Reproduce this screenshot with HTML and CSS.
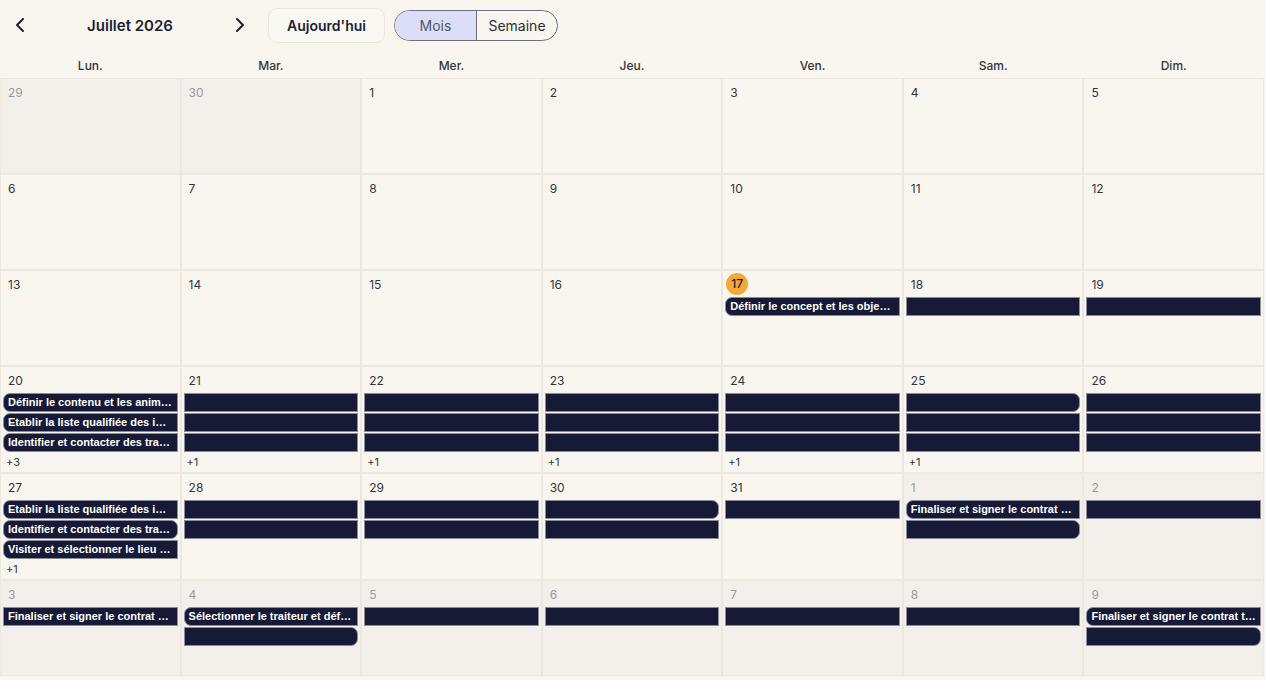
FILE: index.html
```html
<!DOCTYPE html>
<html lang="fr">
<head>
  <meta charset="UTF-8" />
  <meta name="viewport" content="width=device-width, initial-scale=1" />
  <title>Calendrier</title>
  <link rel="stylesheet" href="styles.css">
</head>
<body>
  <header class="toolbar">
    <button class="nav-btn" aria-label="Mois précédent">
      <svg viewBox="0 0 20 20" width="20" height="20"><path d="M13 4 L7 10 L13 16" /></svg>
    </button>
    <h1 class="month-title">Juillet 2026</h1>
    <button class="nav-btn" aria-label="Mois suivant">
      <svg viewBox="0 0 20 20" width="20" height="20"><path d="M7 4 L13 10 L7 16" /></svg>
    </button>
    <button class="today-btn">Aujourd'hui</button>
    <div class="view-switch">
      <button class="active">Mois</button>
      <button>Semaine</button>
    </div>
  </header>

  <div class="weekdays">
    <div>Lun.</div><div>Mar.</div><div>Mer.</div><div>Jeu.</div><div>Ven.</div><div>Sam.</div><div>Dim.</div>
  </div>

  <main class="month">
    <!-- semaine 1 -->
    <div class="day out"><span class="num">29</span></div>
    <div class="day out"><span class="num">30</span></div>
    <div class="day"><span class="num">1</span></div>
    <div class="day"><span class="num">2</span></div>
    <div class="day"><span class="num">3</span></div>
    <div class="day"><span class="num">4</span></div>
    <div class="day"><span class="num">5</span></div>

    <!-- semaine 2 -->
    <div class="day"><span class="num">6</span></div>
    <div class="day"><span class="num">7</span></div>
    <div class="day"><span class="num">8</span></div>
    <div class="day"><span class="num">9</span></div>
    <div class="day"><span class="num">10</span></div>
    <div class="day"><span class="num">11</span></div>
    <div class="day"><span class="num">12</span></div>

    <!-- semaine 3 -->
    <div class="day"><span class="num">13</span></div>
    <div class="day"><span class="num">14</span></div>
    <div class="day"><span class="num">15</span></div>
    <div class="day"><span class="num">16</span></div>
    <div class="day">
      <span class="num today">17</span>
      <div class="ev start">Définir le concept et les objectifs</div>
    </div>
    <div class="day"><span class="num">18</span><div class="ev"></div></div>
    <div class="day"><span class="num">19</span><div class="ev"></div></div>

    <!-- semaine 4 -->
    <div class="day">
      <span class="num">20</span>
      <div class="ev start">Définir le contenu et les animations</div>
      <div class="ev start">Etablir la liste qualifiée des invités</div>
      <div class="ev start">Identifier et contacter des traiteurs</div>
      <div class="more">+3</div>
    </div>
    <div class="day"><span class="num">21</span><div class="ev"></div><div class="ev"></div><div class="ev"></div><div class="more">+1</div></div>
    <div class="day"><span class="num">22</span><div class="ev"></div><div class="ev"></div><div class="ev"></div><div class="more">+1</div></div>
    <div class="day"><span class="num">23</span><div class="ev"></div><div class="ev"></div><div class="ev"></div><div class="more">+1</div></div>
    <div class="day"><span class="num">24</span><div class="ev"></div><div class="ev"></div><div class="ev"></div><div class="more">+1</div></div>
    <div class="day"><span class="num">25</span><div class="ev end"></div><div class="ev"></div><div class="ev"></div><div class="more">+1</div></div>
    <div class="day"><span class="num">26</span><div class="ev"></div><div class="ev"></div><div class="ev"></div></div>

    <!-- semaine 5 -->
    <div class="day">
      <span class="num">27</span>
      <div class="ev start">Etablir la liste qualifiée des invités</div>
      <div class="ev start end">Identifier et contacter des traiteurs</div>
      <div class="ev start">Visiter et sélectionner le lieu de l'événement</div>
      <div class="more">+1</div>
    </div>
    <div class="day"><span class="num">28</span><div class="ev"></div><div class="ev"></div></div>
    <div class="day"><span class="num">29</span><div class="ev"></div><div class="ev"></div></div>
    <div class="day"><span class="num">30</span><div class="ev end"></div><div class="ev"></div></div>
    <div class="day"><span class="num">31</span><div class="ev"></div></div>
    <div class="day out">
      <span class="num">1</span>
      <div class="ev start">Finaliser et signer le contrat du lieu</div>
      <div class="ev end"></div>
    </div>
    <div class="day out"><span class="num">2</span><div class="ev"></div></div>

    <!-- semaine 6 -->
    <div class="day out">
      <span class="num">3</span>
      <div class="ev">Finaliser et signer le contrat du lieu</div>
    </div>
    <div class="day out">
      <span class="num">4</span>
      <div class="ev start">Sélectionner le traiteur et définir le menu</div>
      <div class="ev end"></div>
    </div>
    <div class="day out"><span class="num">5</span><div class="ev"></div></div>
    <div class="day out"><span class="num">6</span><div class="ev"></div></div>
    <div class="day out"><span class="num">7</span><div class="ev"></div></div>
    <div class="day out"><span class="num">8</span><div class="ev"></div></div>
    <div class="day out">
      <span class="num">9</span>
      <div class="ev start">Finaliser et signer le contrat traiteur</div>
      <div class="ev end"></div>
    </div>
  </main>
</body>
</html>
```

FILE: styles.css
```css
* {
  margin: 0;
  padding: 0;
  box-sizing: border-box;
}
body {
  font-family: Inter, 'Noto Sans', sans-serif;
  background: #f9f6f0;
  color: #2b2b33;
}
button {
  font-family: inherit;
  background: none;
  border: none;
  cursor: pointer;
}

/* Toolbar */
.toolbar {
  height: 50px;
  display: flex;
  align-items: center;
}
.nav-btn {
  width: 40px;
  height: 40px;
  display: flex;
  align-items: center;
  justify-content: center;
}
.nav-btn svg {
  fill: none;
  stroke: #1f1f28;
  stroke-width: 2;
  stroke-linecap: round;
  stroke-linejoin: round;
}
.month-title {
  width: 180px;
  text-align: center;
  font-size: 15px;
  font-weight: 600;
  color: #1d1f33;
}
.today-btn {
  margin-left: 8px;
  height: 35px;
  width: 117px;
  border: 1px solid #ebe6dc;
  border-radius: 9px;
  background: #faf8f3;
  font-size: 14px;
  font-weight: 600;
  color: #1b1e38;
}
.view-switch {
  margin-left: 9px;
  display: flex;
  height: 31px;
  border: 1px solid #6e7080;
  border-radius: 16px;
  overflow: hidden;
}
.view-switch button {
  width: 81px;
  font-size: 14px;
  color: #2e2e36;
}
.view-switch button + button {
  border-left: 1px solid #6e7080;
}
.view-switch button.active {
  background: #dcddf7;
  color: #55566a;
}

/* Weekday header */
.weekdays {
  display: grid;
  grid-template-columns: repeat(7, 1fr);
  height: 28px;
  padding-top: 2px;
  margin-right: 2px;
  align-items: center;
  text-align: center;
  font-size: 12px;
  font-weight: 500;
  color: #33343c;
}

/* Month grid */
.month {
  display: grid;
  grid-template-columns: repeat(7, 1fr);
  margin-right: 2px;
}
.day {
  min-height: 96px;
  border: 1px solid #ece8e0;
  padding: 0 2px 2px;
  display: flex;
  flex-direction: column;
  gap: 1px;
  min-width: 0;
}
.day.out {
  background: #f3f0ec;
}
.num {
  display: block;
  height: 26px;
  padding: 3px 0 0 5px;
  margin-bottom: -1px;
  font-size: 12px;
  line-height: 22px;
  color: #33343c;
}
.day.out .num {
  color: #9a9a9e;
}
.num.today {
  padding: 0;
  margin: 2px 0 1px 1px;
  width: 22px;
  height: 22px;
  border-radius: 50%;
  background: #f4a83a;
  text-align: center;
  font-weight: 500;
  color: #1d1f33;
}

/* Event bars */
.ev {
  height: 19px;
  border: 1px solid #8a8c9c;
  background: #161a36;
  color: #fff;
  font-family: 'Liberation Sans', Arial, sans-serif;
  font-size: 11px;
  font-weight: 700;
  line-height: 17px;
  padding: 0 4px;
  white-space: nowrap;
  overflow: hidden;
  text-overflow: ellipsis;
}
.ev.start {
  border-top-left-radius: 7px;
  border-bottom-left-radius: 7px;
}
.ev.end {
  border-top-right-radius: 7px;
  border-bottom-right-radius: 7px;
}
.more {
  margin-top: 1px;
  padding-left: 3px;
  font-size: 11px;
  line-height: 16px;
  color: #33343c;
}
```
